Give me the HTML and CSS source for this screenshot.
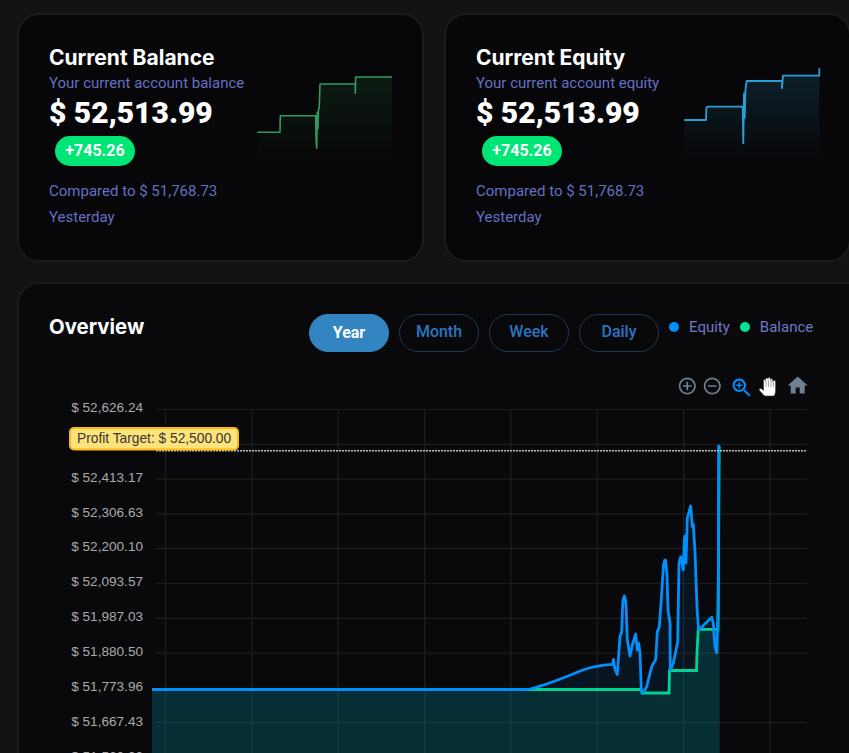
FILE: index.html
```html
<!DOCTYPE html>
<html lang="en">
<head>
<meta charset="utf-8">
<title>Account overview</title>
<link rel="stylesheet" href="styles.css">
</head>
<body>
<main class="page">
  <section class="stats">
    <article class="card stat">
      <div class="stat-text">
        <h2 class="card-title">Current Balance</h2>
        <p class="sub">Your current account balance</p>
        <p class="amount">$ 52,513.99</p>
        <span class="badge">+745.26</span>
        <p class="note first">Compared to $ 51,768.73</p>
        <p class="note">Yesterday</p>
      </div>
      <svg class="spark" viewBox="257 60 137 110" width="137" height="110" aria-hidden="true">
        <defs>
          <linearGradient id="gGreen" x1="0" y1="0" x2="0" y2="1"><stop offset="0" stop-color="#2f9a5a" stop-opacity=".14"/><stop offset="1" stop-color="#2f9a5a" stop-opacity="0"/></linearGradient>
          <linearGradient id="gBlue" x1="0" y1="0" x2="0" y2="1"><stop offset="0" stop-color="#2a9fd6" stop-opacity=".16"/><stop offset="1" stop-color="#2a9fd6" stop-opacity="0"/></linearGradient>
        </defs>
        <path fill="url(#gGreen)" d="M257.3 132.3H280L280.3 115.7H315.7L316.7 148L317.7 111.7L319.3 106.7L320 84H355.3L355.7 77H392V167H257.3Z"/>
        <path class="spark-line green" d="M257.3 132.3H280L280.3 115.7H315.7L316 138L316.7 148.3L317.2 112L317.9 129L318.5 110L319.2 108L320 84H355.3V93.3L355.7 77H392"/>
      </svg>
    </article>
    <article class="card stat">
      <div class="stat-text">
        <h2 class="card-title">Current Equity</h2>
        <p class="sub">Your current account equity</p>
        <p class="amount">$ 52,513.99</p>
        <span class="badge">+745.26</span>
        <p class="note first">Compared to $ 51,768.73</p>
        <p class="note">Yesterday</p>
      </div>
      <svg class="spark" viewBox="684 60 137 110" width="137" height="110" aria-hidden="true">
        <path fill="url(#gBlue)" d="M684.3 120H706L707.3 106.7H742.7L744 93.3L746.7 81H782L783 75.7H819.5V165H684.3Z"/>
        <path class="spark-line blue" d="M684.3 120H706L706.4 108.3L707.3 106.7H742.7L743.3 143.3L744 93.5L744.7 118L745.6 88L746.7 81H782V88.3L783 75.7H819.3V68.3"/>
      </svg>
    </article>
  </section>

  <section class="card overview">
    <header class="overview-head">
      <h2 class="card-title overview-title">Overview</h2>
      <div class="ranges">
        <button class="range active">Year</button>
        <button class="range">Month</button>
        <button class="range">Week</button>
        <button class="range">Daily</button>
      </div>
      <ul class="legend">
        <li class="legend-item"><span class="dot equity"></span>Equity</li>
        <li class="legend-item"><span class="dot balance"></span>Balance</li>
      </ul>
    </header>
    <svg class="chart" viewBox="19 370 832 383" width="832" height="383" role="img" aria-label="Equity and balance chart">
      <g class="grid">
        <path d="M156 409.5H807M156 444.3H807M156 479.1H807M156 513.9H807M156 548.7H807M156 583.5H807M156 618.3H807M156 653.1H807M156 722.7H807"/>
        <path d="M165.5 409.5V753M252 409.5V753M338.3 409.5V753M424.6 409.5V753M511 409.5V753M597.3 409.5V753M683.6 409.5V753M770 409.5V753"/>
      </g>
      <path class="area-equity" d="M152 689.5H527C545 686 565 677 583 670C592 666.5 602 665 612.7 664.3L613.3 659.3L615 669.3L617.3 674.3L619 650L620 636.7L621.7 631.7L622.7 603.3L624.3 596L626 605L627.3 640L630 656L632.3 645L635.7 634L637.3 650L638.7 643.3L640 653.3L641.3 690L642.7 693.3L646.7 686.7L651.7 666.7L655.7 659.3L657.3 631.7L659.3 626.7L661.7 593.3L665 559.5L667 575L668 610L670 623L670.3 670L673.3 663.3L677.7 641.7L679 563L680.7 556.7L683.3 570L684.3 540L685 536L686 563L687.3 518L690.7 506L692.3 526.7L693.3 524L695 552L696 580L697.3 613L698.7 630L711.7 617.3L713.3 623.3L715 646.7L716.7 652.7L718 613L718.3 580L718.7 445L719.7 447V760H152Z"/>
      <path class="area-balance" d="M152 689.5H641V693H669V670.5H696.5V629.3H718V447H719.7V760H152Z"/>
      <path class="line-balance" d="M152 689.5H641L642 693H669L669.5 670.5H696.5L697 652L698.3 629.3H718L718.5 560L719.2 447"/>
      <path class="line-equity" d="M152 689.5H527C545 686 565 677 583 670C592 666.5 602 665 612.7 664.3L613.3 659.3L615 669.3L617.3 674.3L619 650L620 636.7L621.7 631.7L622.7 603.3Q623.4 596 624.3 596Q625.4 596 626 605L627.3 640L630 656L632.3 645L635.7 634L637.3 650L638.7 643.3L640 653.3L641.3 690L642.7 693.3L646.7 686.7L651.7 666.7L655.7 659.3L657.3 631.7L659.3 626.7L661.7 593.3L663.5 565Q664.5 559.5 665.5 560L667 575L668 610L670 623L670.3 670L673.3 663.3L677.7 641.7L679 563L680.7 556.7L683.3 570L684.3 540L685 536L686 563L687.3 518L690.7 506L692.3 526.7L693.3 524L695 552L696 580L697.3 613L698.7 630L711.7 617.3L713.3 623.3L715 646.7L716.7 652.7L718 613L718.3 580L718.7 446L719.7 448"/>
      <path class="target-line" d="M156 450.8H807"/>
      <g class="ticks">
        <text x="143" y="412">$ 52,626.24</text>
        <text x="143" y="482">$ 52,413.17</text>
        <text x="143" y="517">$ 52,306.63</text>
        <text x="143" y="551">$ 52,200.10</text>
        <text x="143" y="586">$ 52,093.57</text>
        <text x="143" y="621">$ 51,987.03</text>
        <text x="143" y="656">$ 51,880.50</text>
        <text x="143" y="691">$ 51,773.96</text>
        <text x="143" y="726">$ 51,667.43</text>
        <text x="143" y="761">$ 51,560.90</text>
      </g>
      <rect class="target-box" x="70" y="428" width="168" height="21.5" rx="4"/>
      <text class="target-text" x="77" y="443">Profit Target: $ 52,500.00</text>
      <g class="tool" transform="translate(677.1 375.8) scale(.85)"><path d="M13 7h-2v4H7v2h4v4h2v-4h4v-2h-4V7zm-1-5C6.48 2 2 6.48 2 12s4.48 10 10 10 10-4.48 10-10S17.52 2 12 2zm0 18c-4.41 0-8-3.59-8-8s3.59-8 8-8 8 3.59 8 8-3.59 8-8 8z"/></g>
      <g class="tool" transform="translate(702.1 375.8) scale(.85)"><path d="M7 11v2h10v-2H7zm5-9C6.48 2 2 6.48 2 12s4.48 10 10 10 10-4.48 10-10S17.52 2 12 2zm0 18c-4.41 0-8-3.59-8-8s3.59-8 8-8 8 3.59 8 8-3.59 8-8 8z"/></g>
      <g class="tool selected" transform="translate(729.5 375.5) scale(1.03)"><path d="M15.5 14h-.79l-.28-.27C15.41 12.59 16 11.11 16 9.5 16 5.91 13.09 3 9.5 3S3 5.91 3 9.5 5.91 16 9.5 16c1.61 0 3.09-.59 4.23-1.57l.27.28v.79l5 4.99L20.49 19l-4.99-5zm-6 0C7.01 14 5 11.99 5 9.5S7.01 5 9.5 5 14 7.01 14 9.5 11.99 14 9.5 14z"/><path d="M12.5 10.2h-2.3v2.3H8.8v-2.3H6.5V8.8h2.3V6.5h1.4v2.3h2.3v1.4z"/></g>
      <path class="hand" d="M764 395.5L759.5 390.5C758.6 389.3 760 388 761.3 388.8L763.5 390.3V380.6C763.5 379.2 765.6 379.2 765.6 380.6V379C765.6 377.5 768 377.5 768 379V378.6C768 377.2 770.4 377.2 770.4 378.6V379.8C770.4 378.5 772.7 378.5 772.7 379.8V381.5C772.7 380.3 775.6 380.3 775.6 381.5V390C775.6 393 775 394.5 774 396H765.5Z"/>
      <path class="hand-lines" d="M766 381V387M768.5 380V387M771 380V387M773.5 382V387"/>
      <g class="tool" transform="translate(785.7 373.6) scale(1)"><path d="M10 20v-6h4v6h5v-8h3L12 3 2 12h3v8z"/></g>
    </svg>
  </section>
</main>
</body>
</html>
```
FILE: styles.css
```css
* { box-sizing: border-box; }
html, body { margin: 0; height: 753px; overflow: hidden; background: #121212; }
.page { width: 870px; padding: 13px 0 0 17px; font-family: Roboto, sans-serif; }
.stats { display: grid; grid-template-columns: 407px 407px; gap: 20px; margin-bottom: 20px; }
.card { background: #070608; border: 2px solid #1c1c1c; border-radius: 22px; }
.stat { display: flex; height: 249px; padding: 28px 0 0 30px; }
.stat-text { flex: 0 0 208px; }
.card-title { margin: 0; font: 700 21px/29px Inter, sans-serif; color: #fff; white-space: nowrap; }
.sub { margin: 0; font-size: 15px; line-height: 22px; color: #6470c4; white-space: nowrap; }
.amount { margin: 0; font: 900 30px/38px Roboto, sans-serif; color: #fff; white-space: nowrap; }
.badge { display: block; width: 80px; height: 30px; margin: 4px 0 14px 6px; border-radius: 15px; background: #00e676; color: #fff; font: 700 16px/30px Roboto, sans-serif; text-align: center; }
.note { margin: 0; font-size: 15px; line-height: 22px; color: #6470c4; white-space: nowrap; }
.note.first { margin-bottom: 4px; }
.spark { margin-top: 17px; flex: none; }
.spark-line { fill: none; stroke-width: 1.6; stroke-linejoin: round; }
.spark-line.green { stroke: #349a5c; }
.spark-line.blue { stroke: #2a9fd6; stroke-width: 1.8; }
.overview { height: 520px; background: #09090b; }
.overview-head { display: flex; align-items: flex-start; padding: 30px 0 0 30px; margin-bottom: 18px; }
.overview-title { flex: 0 0 260px; font-size: 20.4px; line-height: 26px; }
.ranges { display: flex; gap: 10px; }
.range { width: 80px; height: 38px; padding: 0 0 2px; border: 1px solid #1f3a55; border-radius: 19px; background: transparent; color: #2a75c2; font: 500 16px/34px Roboto, sans-serif; }
.range.active { padding: 0; background: #3385c2; border-color: #3385c2; color: #fff; font-weight: 700; line-height: 36px; }
.legend { display: flex; gap: 10px; margin: 0 0 0 10px; padding: 0; list-style: none; }
.legend-item { display: flex; align-items: center; gap: 10px; height: 26px; font-size: 15px; color: #6f78c6; }
.dot { width: 10px; height: 10px; border-radius: 50%; }
.dot.equity { background: #008ffb; }
.dot.balance { background: #00e396; }
.chart { display: block; }
.grid path { fill: none; stroke: #1e1e1e; stroke-width: 1.2; }
.area-equity { fill: rgba(0, 143, 251, .09); }
.area-balance { fill: rgba(0, 215, 190, .13); }
.line-equity { fill: none; stroke: #008ffb; stroke-width: 2.8; stroke-linejoin: round; }
.line-balance { fill: none; stroke: #00d396; stroke-width: 2.8; stroke-linejoin: miter; }
.target-line { fill: none; stroke: #bdbdb5; stroke-width: 1.5; stroke-dasharray: 2 1; }
.ticks text { font: 13.6px "Liberation Sans", Arial, sans-serif; fill: #a9a9a9; text-anchor: end; }
.target-box { fill: #fee27a; stroke: #fdb913; stroke-width: 2; }
.target-text { font: 13.75px "Liberation Sans", Arial, sans-serif; fill: #373737; }
.tool { fill: #6e8192; }
.tool.selected { fill: #008ffb; }
.hand { fill: #fff; stroke: #333; stroke-width: .6; }
.hand-lines { fill: none; stroke: #888; stroke-width: .7; }
```
